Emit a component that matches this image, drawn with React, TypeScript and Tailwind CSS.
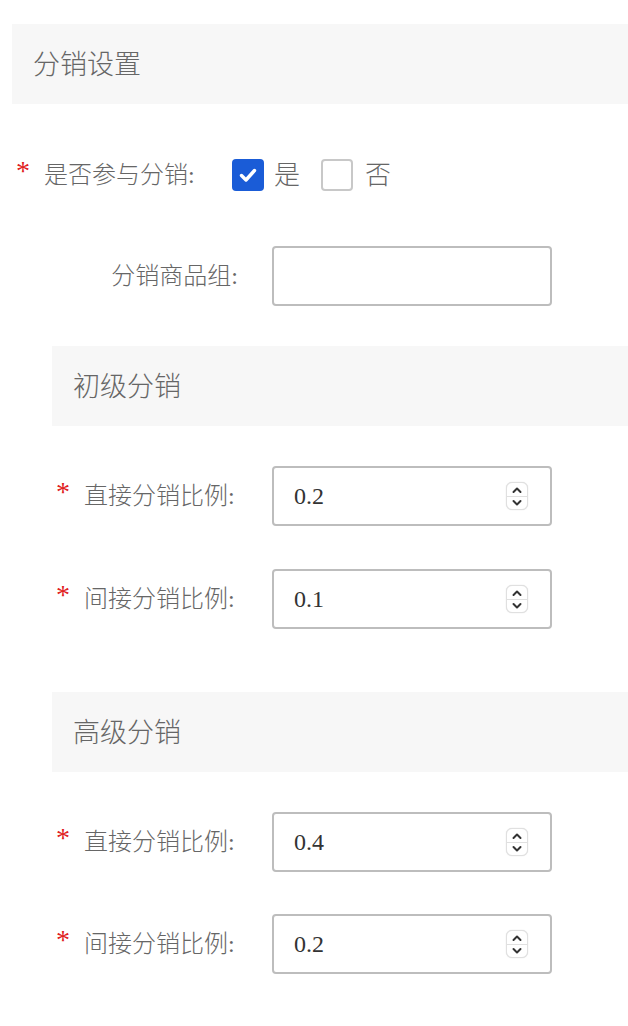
import React from 'react';

// ============================================================================
// SMALL PIECES
// ============================================================================

const FONT = '"Liberation Serif", "Noto Sans CJK SC", serif';

function SectionHeader({ title, indent = false }: { title: string; indent?: boolean }) {
  return (
    <div
      className={`h-[80px] bg-[#f7f7f7] flex items-center pt-[3px] ${indent ? 'ml-[52px] pl-[21px]' : 'ml-[12px] pl-[21px]'}`}
    >
      <span className="text-[27px] text-[#666] font-light">{title}</span>
    </div>
  );
}

function Spinner() {
  return (
    <div className="w-[22px] h-[28px] rounded-[6px] border border-[#e0e0e0] bg-white flex flex-col items-center justify-center shadow-[0_0_1px_rgba(0,0,0,0.2)]">
      <svg width="12" height="8" viewBox="0 0 12 8" className="mb-[2px]">
        <path d="M2.5 6 L6 2.5 L9.5 6" fill="none" stroke="#333" strokeWidth="2" strokeLinecap="round" strokeLinejoin="round" />
      </svg>
      <div className="w-full h-px bg-[#e0e0e0]" />
      <svg width="12" height="8" viewBox="0 0 12 8" className="mt-[2px]">
        <path d="M2.5 2 L6 5.5 L9.5 2" fill="none" stroke="#333" strokeWidth="2" strokeLinecap="round" strokeLinejoin="round" />
      </svg>
    </div>
  );
}

function NumberInput({ value }: { value: string }) {
  return (
    <div className="w-[280px] h-[60px] border-2 border-[#bdbdbd] rounded-[4px] flex items-center pl-[20px] pr-[22px] justify-between">
      <span className="text-[24px] text-[#333]">{value}</span>
      <Spinner />
    </div>
  );
}

function Asterisk() {
  return <span className="w-[28px] text-[28px] text-[#e02020] leading-none pb-[8px]">*</span>;
}

function RatioRow({ label, value, className = '' }: { label: string; value: string; className?: string }) {
  return (
    <div className={`flex items-center h-[60px] pl-[56px] ${className}`}>
      <Asterisk />
      <span className="w-[154px] text-[24px] text-[#666] font-light whitespace-nowrap">{label}:</span>
      <div className="ml-[34px]">
        <NumberInput value={value} />
      </div>
    </div>
  );
}

// ============================================================================
// MAIN
// ============================================================================

export default function App() {
  return (
    <div className="w-[628px] h-[1026px] bg-white pt-[24px]" style={{ fontFamily: FONT }}>
      <SectionHeader title="分销设置" />

      {/* 是否参与分销 */}
      <div className="flex items-center h-[60px] mt-[41px] pl-[16px]">
        <Asterisk />
        <span className="w-[188px] text-[24px] text-[#666] font-light whitespace-nowrap">是否参与分销:</span>
        <div className="flex items-center">
          <div className="w-[32px] h-[32px] rounded-[4px] bg-[#1a5cd7] flex items-center justify-center">
            <svg width="22" height="22" viewBox="0 0 22 22">
              <path d="M4.5 11.5 L9 16 L17.5 6.5" fill="none" stroke="#fff" strokeWidth="3.4" strokeLinecap="round" strokeLinejoin="round" />
            </svg>
          </div>
          <span className="ml-[10px] text-[26px] text-[#666] font-light">是</span>
          <div className="ml-[21px] w-[32px] h-[32px] rounded-[4px] border-2 border-[#c8c8c8] bg-white" />
          <span className="ml-[12px] text-[26px] text-[#666] font-light">否</span>
        </div>
      </div>

      {/* 分销商品组 */}
      <div className="flex items-center h-[60px] mt-[41px]">
        <span className="w-[238px] text-right text-[24px] text-[#666] font-light whitespace-nowrap">分销商品组:</span>
        <div className="ml-[34px] w-[280px] h-[60px] border-2 border-[#bdbdbd] rounded-[4px]" />
      </div>

      <div className="mt-[40px]">
        <SectionHeader title="初级分销" indent />
      </div>
      <RatioRow label="直接分销比例" value="0.2" className="mt-[40px]" />
      <RatioRow label="间接分销比例" value="0.1" className="mt-[43px]" />

      <div className="mt-[63px]">
        <SectionHeader title="高级分销" indent />
      </div>
      <RatioRow label="直接分销比例" value="0.4" className="mt-[40px]" />
      <RatioRow label="间接分销比例" value="0.2" className="mt-[42px]" />
    </div>
  );
}
